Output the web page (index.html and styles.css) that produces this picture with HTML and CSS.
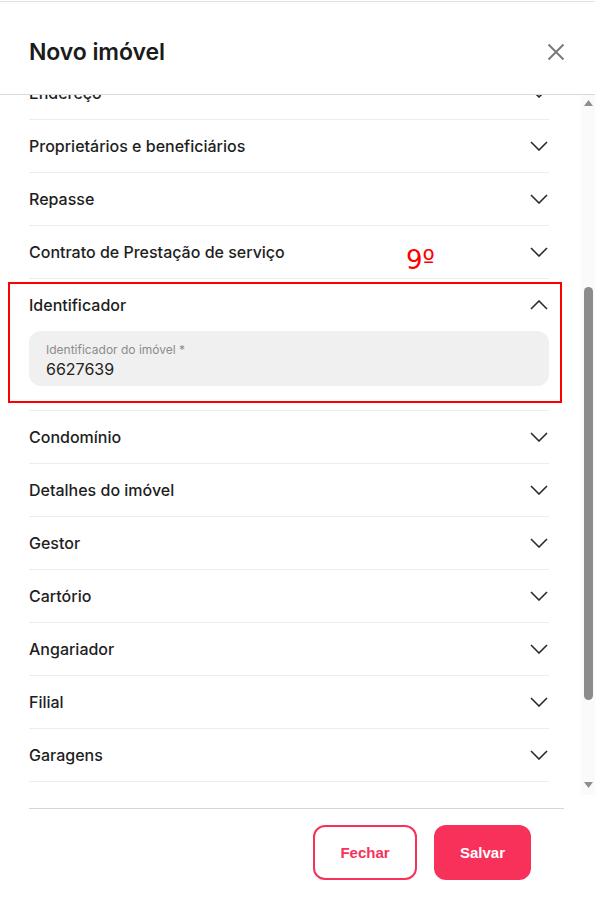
FILE: index.html
```html
<!DOCTYPE html>
<html lang="pt-BR">
<head>
<meta charset="utf-8">
<title>Novo imóvel</title>
<link rel="stylesheet" href="styles.css">
</head>
<body>
<div class="modal">
  <header class="modal-header">
    <h1 class="modal-title">Novo imóvel</h1>
    <button class="close-btn" aria-label="Fechar">
      <svg width="18" height="18" viewBox="0 0 18 18"><path d="M1.5 1.5 L16.5 16.5 M16.5 1.5 L1.5 16.5" stroke="#7a7a7a" stroke-width="2" fill="none"/></svg>
    </button>
  </header>

  <div class="body-area">
    <div class="scroll" id="scroll">
      <ul class="sections">
        <li class="section"><div class="section-head"><span>Dados gerais</span><svg class="chev" viewBox="0 0 18 10"><path d="M1 1 L9 9 L17 1"/></svg></div></li>
        <li class="section"><div class="section-head"><span>Tipo do imóvel</span><svg class="chev" viewBox="0 0 18 10"><path d="M1 1 L9 9 L17 1"/></svg></div></li>
        <li class="section"><div class="section-head"><span>Finalidade</span><svg class="chev" viewBox="0 0 18 10"><path d="M1 1 L9 9 L17 1"/></svg></div></li>
        <li class="section"><div class="section-head"><span>Valores</span><svg class="chev" viewBox="0 0 18 10"><path d="M1 1 L9 9 L17 1"/></svg></div></li>
        <li class="section"><div class="section-head"><span>Endereço</span><svg class="chev" viewBox="0 0 18 10"><path d="M1 1 L9 9 L17 1"/></svg></div></li>
        <li class="section"><div class="section-head"><span>Proprietários e beneficiários</span><svg class="chev" viewBox="0 0 18 10"><path d="M1 1 L9 9 L17 1"/></svg></div></li>
        <li class="section"><div class="section-head"><span>Repasse</span><svg class="chev" viewBox="0 0 18 10"><path d="M1 1 L9 9 L17 1"/></svg></div></li>
        <li class="section"><div class="section-head"><span>Contrato de Prestação de serviço</span><svg class="chev" viewBox="0 0 18 10"><path d="M1 1 L9 9 L17 1"/></svg></div></li>
        <li class="section section-open">
          <span class="note-num">9º</span>
          <span class="note-box"></span>
          <div class="section-head"><span>Identificador</span><svg class="chev" viewBox="0 0 18 10"><path d="M1 9 L9 1 L17 9"/></svg></div>
          <div class="field">
            <label class="field-label">Identificador do imóvel *</label>
            <div class="field-value">6627639</div>
          </div>
        </li>
        <li class="section"><div class="section-head"><span>Condomínio</span><svg class="chev" viewBox="0 0 18 10"><path d="M1 1 L9 9 L17 1"/></svg></div></li>
        <li class="section"><div class="section-head"><span>Detalhes do imóvel</span><svg class="chev" viewBox="0 0 18 10"><path d="M1 1 L9 9 L17 1"/></svg></div></li>
        <li class="section"><div class="section-head"><span>Gestor</span><svg class="chev" viewBox="0 0 18 10"><path d="M1 1 L9 9 L17 1"/></svg></div></li>
        <li class="section"><div class="section-head"><span>Cartório</span><svg class="chev" viewBox="0 0 18 10"><path d="M1 1 L9 9 L17 1"/></svg></div></li>
        <li class="section"><div class="section-head"><span>Angariador</span><svg class="chev" viewBox="0 0 18 10"><path d="M1 1 L9 9 L17 1"/></svg></div></li>
        <li class="section"><div class="section-head"><span>Filial</span><svg class="chev" viewBox="0 0 18 10"><path d="M1 1 L9 9 L17 1"/></svg></div></li>
        <li class="section"><div class="section-head"><span>Garagens</span><svg class="chev" viewBox="0 0 18 10"><path d="M1 1 L9 9 L17 1"/></svg></div></li>
        <li class="section section-last"><div class="section-head"><span>Chaves</span><svg class="chev" viewBox="0 0 18 10"><path d="M1 1 L9 9 L17 1"/></svg></div></li>
      </ul>
    </div>
    <div class="scrollbar" aria-hidden="true">
      <svg class="sb-arrow" viewBox="0 0 9 6"><path d="M0 6 L4.5 0 L9 6 Z"/></svg>
      <div class="sb-track"><div class="sb-thumb"></div></div>
      <svg class="sb-arrow" viewBox="0 0 9 6"><path d="M0 0 L4.5 6 L9 0 Z"/></svg>
    </div>
  </div>

  <footer class="modal-footer">
    <div class="actions">
      <button class="btn btn-outline">Fechar</button>
      <button class="btn btn-primary">Salvar</button>
    </div>
  </footer>
</div>
<script src="script.js"></script>
</body>
</html>
```

FILE: styles.css
```css
* { box-sizing: border-box; }

html, body {
  margin: 0;
  padding: 0;
  background: #ffffff;
}

body {
  font-family: Inter, "Noto Sans", sans-serif;
  color: #1e1e1e;
}

.modal {
  margin-top: 1px;
  border-top: 1px solid #e2e2e2;
  height: 908px;
  display: flex;
  flex-direction: column;
}

.modal-header {
  height: 93px;
  flex: none;
  display: flex;
  align-items: center;
  justify-content: space-between;
  padding: 8px 30px 0 29px;
  border-bottom: 1px solid #d9d9d9;
}

.modal-title {
  margin: 0;
  font-size: 23px;
  font-weight: 600;
  letter-spacing: -0.1px;
  color: #1b1b1b;
}

.close-btn {
  border: 0;
  background: none;
  padding: 0;
  width: 18px;
  height: 18px;
  display: flex;
}

.body-area {
  height: 700px;
  flex: none;
  display: flex;
}

.scroll {
  flex: 1;
  overflow: hidden;
}

.sections {
  list-style: none;
  margin: 0;
  padding: 6px 32px 0 29px;
}

.section {
  position: relative;
  border-bottom: 1px solid #ececec;
}

.section-head {
  height: 52px;
  display: flex;
  align-items: center;
  justify-content: space-between;
  font-size: 16px;
  font-weight: 500;
  color: #1e1e1e;
}

.chev {
  width: 18px;
  height: 10px;
  margin-right: 1px;
  fill: none;
  stroke: #2a2a2a;
  stroke-width: 1.6;
}

.section-open {
  padding-bottom: 24px;
}

.field {
  height: 55px;
  background: #f0f0f0;
  border-radius: 12px;
  padding: 11px 17px 0;
}

.field-label {
  display: block;
  font-size: 12px;
  line-height: 15px;
  color: #8c8c8c;
}

.field-value {
  margin-top: 2px;
  font-size: 16px;
  line-height: 20px;
  color: #222222;
}

.note-box {
  position: absolute;
  top: 3px;
  left: -21px;
  right: -13px;
  bottom: 7px;
  border: 2px solid #ff0000;
  pointer-events: none;
}

.note-num {
  position: absolute;
  top: -36px;
  left: 377px;
  font-family: "DejaVu Sans", "Open Sans", sans-serif;
  font-size: 26px;
  line-height: 34px;
  color: #ff0000;
}

.scrollbar {
  width: 14px;
  flex: none;
  background: #fafafa;
  display: flex;
  flex-direction: column;
  align-items: center;
  padding: 5px 0 7px;
}

.sb-arrow {
  width: 9px;
  height: 6px;
  fill: #8e8e8e;
  flex: none;
}

.sb-track {
  flex: 1;
  width: 9px;
  padding: 181px 0 0;
}

.sb-thumb {
  width: 9px;
  height: 413px;
  border-radius: 5px;
  background: #8b8b8b;
}

.modal-footer {
  flex: 1;
  padding: 13px 31px 0 29px;
}

.actions {
  border-top: 1px solid #d6d6d6;
  display: flex;
  justify-content: flex-end;
  gap: 17px;
  padding: 16px 33px 0 0;
}

.btn {
  height: 55px;
  border-radius: 12px;
  font-family: "Liberation Sans", Arial, sans-serif;
  font-size: 15px;
  font-weight: 700;
  cursor: pointer;
}

.btn-outline {
  width: 104px;
  background: #ffffff;
  border: 2px solid #f8315a;
  color: #f8315a;
}

.btn-primary {
  width: 97px;
  background: #f8315a;
  border: 0;
  color: #ffffff;
}
```

FILE: script.js
```js
document.getElementById('scroll').scrollTop = 246;
```
